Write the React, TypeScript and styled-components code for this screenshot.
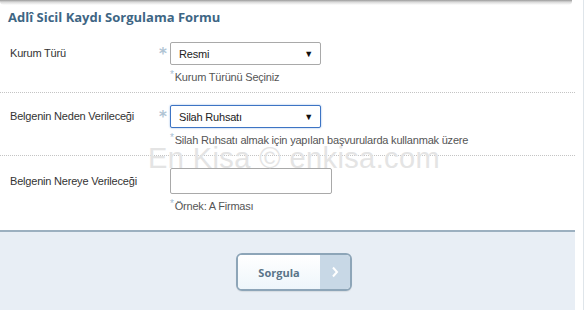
import React from 'react';
import styled, { createGlobalStyle } from 'styled-components';

const GlobalStyle = createGlobalStyle`
	html, body {
		margin: 0;
		padding: 0;
		background: #ffffff;
	}
	body {
		font-family: 'Liberation Sans', Arial, sans-serif;
		font-size: 11px;
		color: #333;
	}
`;

const Page = styled.div`
	position: relative;
	box-sizing: border-box;
	width: 584px;
	height: 310px;
	overflow: hidden;
	background: #fff;
	border-right: 1px solid #dfe5ea;
`;

const Panel = styled.div`
	width: 575px;
	display: flex;
	flex-direction: column;
`;

const TopShadow = styled.div`
	height: 5px;
	margin-right: 3px;
	background: linear-gradient(#9a9a9a, #d8d8d8 40%, #ffffff);
	border-radius: 0 0 4px 4px;
`;

const Title = styled.h2`
	margin: 0;
	padding: 3px 0 0 8px;
	height: 22px;
	line-height: 18px;
	font-family: 'Open Sans', 'DejaVu Sans', sans-serif;
	font-weight: 700;
	font-size: 13px;
	color: #3e6684;
`;

const Row = styled.div<{ $last?: boolean }>`
	display: grid;
	grid-template-columns: 160px 1fr;
	padding: 12px 0 8px 0;
	border-bottom: ${(p) => (p.$last ? 'none' : '1px dotted #c4c4c4')};
`;

const Label = styled.label<{ $h: number }>`
	padding-left: 10px;
	line-height: ${(p) => p.$h}px;
	font-size: 11px;
	letter-spacing: -0.2px;
	color: #333;
`;

const FieldCol = styled.div`
	display: flex;
	flex-direction: column;
`;

const FieldLine = styled.div`
	display: flex;
	align-items: center;
`;

const Star = styled.span<{ $hidden?: boolean }>`
	width: 10px;
	margin-left: -1px;
	margin-right: 1px;
	font-family: 'DejaVu Sans', sans-serif;
	font-weight: 700;
	font-size: 15px;
	line-height: 12px;
	height: 12px;
	color: #b0c4d4;
	visibility: ${(p) => (p.$hidden ? 'hidden' : 'visible')};
`;

const Select = styled.div<{ $focused?: boolean }>`
	box-sizing: border-box;
	width: 151px;
	height: 23px;
	display: flex;
	align-items: center;
	justify-content: space-between;
	padding: 0 7px 0 8px;
	background: #fff;
	border: 1px solid ${(p) => (p.$focused ? '#3d74c4' : '#a9a9a9')};
	border-radius: 2px;
	box-shadow: ${(p) => (p.$focused ? '0 0 2px #8ab0e0' : 'none')};
	font-size: 11px;
	letter-spacing: -0.2px;
	color: #222;
`;

const Arrow = styled.span`
	font-size: 9px;
	color: #111;
`;

const TextInput = styled.div`
	box-sizing: border-box;
	width: 162px;
	height: 26px;
	background: #fff;
	border: 1px solid #a9a9a9;
	border-radius: 2px;
`;

const Hint = styled.div`
	margin-top: 5px;
	padding-left: 10px;
	height: 14px;
	line-height: 14px;
	font-size: 11px;
	letter-spacing: -0.2px;
	color: #555;

	&::before {
		content: '*';
		position: relative;
		top: -3px;
		color: #a8c0d4;
		font-size: 10px;
		margin-right: 1px;
	}
`;

const Watermark = styled.div`
	position: absolute;
	left: 148px;
	top: 142px;
	font-family: 'Liberation Sans', Arial, sans-serif;
	font-size: 29px;
	letter-spacing: 0.4px;
	color: #e4e4e4;
	pointer-events: none;
	white-space: nowrap;
`;

const Footer = styled.div`
	margin-top: 9px;
	height: 80px;
	background: #e8eef5;
	border-top: 2px solid #9cb0c0;
	display: flex;
	justify-content: center;
	padding-top: 21px;
	box-sizing: border-box;
`;

const Button = styled.button`
	box-sizing: border-box;
	width: 116px;
	height: 38px;
	margin-left: 13px;
	padding: 0;
	display: flex;
	border: 2px solid #8da5b8;
	border-radius: 6px;
	overflow: hidden;
	background: #fff;
	cursor: pointer;
	box-shadow: 0 1px 1px rgba(0, 0, 0, 0.08);
`;

const ButtonLabel = styled.span`
	flex: 1;
	display: flex;
	align-items: center;
	justify-content: center;
	background: linear-gradient(#ffffff, #eef6fb);
	font-family: 'Open Sans', 'DejaVu Sans', sans-serif;
	font-weight: 700;
	font-size: 11px;
	color: #5a7488;
`;

const ButtonArrow = styled.span`
	width: 30px;
	display: flex;
	align-items: center;
	justify-content: center;
	background: #c8d8e6;
`;

export default function App() {
	return (
		<Page>
			<GlobalStyle />
			<Panel>
				<TopShadow />
				<Title>Adlî Sicil Kaydı Sorgulama Formu</Title>
				<Row>
					<Label $h={23}>Kurum Türü</Label>
					<FieldCol>
						<FieldLine>
							<Star>*</Star>
							<Select>
								Resmi
								<Arrow>▼</Arrow>
							</Select>
						</FieldLine>
						<Hint>Kurum Türünü Seçiniz</Hint>
					</FieldCol>
				</Row>
				<Row>
					<Label $h={23}>Belgenin Neden Verileceği</Label>
					<FieldCol>
						<FieldLine>
							<Star>*</Star>
							<Select $focused>
								Silah Ruhsatı
								<Arrow>▼</Arrow>
							</Select>
						</FieldLine>
						<Hint>Silah Ruhsatı almak için yapılan başvurularda kullanmak üzere</Hint>
					</FieldCol>
				</Row>
				<Row $last>
					<Label $h={26}>Belgenin Nereye Verileceği</Label>
					<FieldCol>
						<FieldLine>
							<Star $hidden>*</Star>
							<TextInput />
						</FieldLine>
						<Hint>Örnek: A Firması</Hint>
					</FieldCol>
				</Row>
				<Footer>
					<Button type="button">
						<ButtonLabel>Sorgula</ButtonLabel>
						<ButtonArrow>
							<svg width="8" height="12" viewBox="0 0 8 12">
								<path d="M2 1.5 L6 6 L2 10.5" fill="none" stroke="#ffffff" strokeWidth="2" />
							</svg>
						</ButtonArrow>
					</Button>
				</Footer>
			</Panel>
			<Watermark>En Kisa © enkisa.com</Watermark>
		</Page>
	);
}
